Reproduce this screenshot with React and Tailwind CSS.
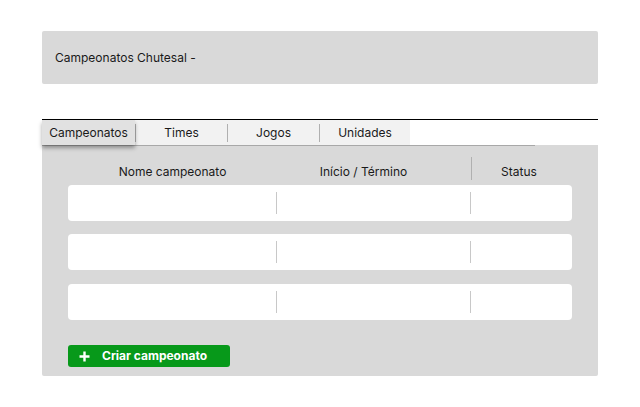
import React from "react";

function Row({ mt }) {
  return (
    <div className={`${mt} grid h-[36px] grid-cols-[209px_194px_101px] rounded-[4px] bg-white`}>
      <div className="flex items-center justify-end">
        <div className="h-[22px] w-px bg-[#c8c8c8]" />
      </div>
      <div className="flex items-center justify-end">
        <div className="h-[22px] w-px bg-[#c8c8c8]" />
      </div>
      <div />
    </div>
  );
}

export default function App() {
  const tabs = ["Campeonatos", "Times", "Jogos", "Unidades"];
  return (
    <div
      className="min-h-[407px] w-[640px] bg-white px-[42px] pt-[31px] text-[#1a1a1a]"
      style={{ fontFamily: "Inter, 'Noto Sans', sans-serif" }}
    >
      <div className="flex h-[53px] items-center rounded-[2px] bg-[#d9d9d9] pl-[13px] text-[12px]">
        Campeonatos Chutesal -
      </div>

      <div className="mt-[35px] h-px bg-black" />
      <div className="flex h-[25px] w-[368px] bg-[#f2f2f2] text-[12px]">
        <div className="relative z-10 flex w-[93px] items-center justify-center bg-[#e1e1e1] shadow-[0_3px_4px_rgba(0,0,0,0.35)]">
          {tabs[0]}
        </div>
        <div className="h-[18px] w-px self-center bg-[#b0b0b0]" />
        <div className="flex w-[91px] items-center justify-center">{tabs[1]}</div>
        <div className="h-[18px] w-px self-center bg-[#b0b0b0]" />
        <div className="flex w-[91px] items-center justify-center">{tabs[2]}</div>
        <div className="h-[18px] w-px self-center bg-[#b0b0b0]" />
        <div className="flex w-[90px] items-center justify-center">{tabs[3]}</div>
      </div>

      <div className="h-[231px] rounded-b-[2px] bg-[#d9d9d9]">
        <div className="h-px w-[493px] bg-[#a8a8a8]" />
        <div className="px-[26px]">
          <div className="mt-[11px] grid h-[23px] grid-cols-[209px_194px_101px] text-[12px]">
            <div className="flex items-start justify-center pt-[6px]">Nome campeonato</div>
            <div className="flex items-start justify-center pt-[6px] pr-[21px]">Início / Término</div>
            <div className="relative flex items-start justify-center pt-[6px] pr-[5px]">
              <div className="absolute left-0 top-0 h-[23px] w-px bg-[#b0b0b0]" />
              Status
            </div>
          </div>
          <Row mt="mt-[5px]" />
          <Row mt="mt-[13px]" />
          <Row mt="mt-[14px]" />
          <button className="mt-[25px] flex h-[22px] w-[162px] items-center rounded-[3px] bg-[#07991a] pl-[11px] text-[12px] font-bold text-white">
            <svg width="11" height="11" viewBox="0 0 11 11" className="mr-[12px]">
              <path d="M5.5 0.5v10M0.5 5.5h10" stroke="white" strokeWidth="2.4" />
            </svg>
            <span>Criar campeonato</span>
          </button>
        </div>
      </div>
    </div>
  );
}
